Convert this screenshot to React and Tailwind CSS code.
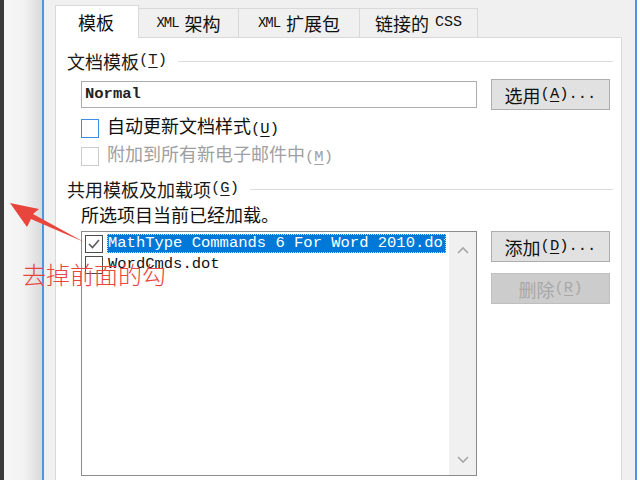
import React from 'react'

const cjk = "font-['Noto_Sans_CJK_SC',sans-serif]"
const mono = "font-['Liberation_Mono','Noto_Sans_CJK_SC',monospace]"

function Key({ k, dots }) {
  return (
    <span className={`${mono} text-[15.5px]`}>
      (<span className="underline underline-offset-[3px]">{k}</span>){dots ? '...' : ''}
    </span>
  )
}

function Group({ title, k }) {
  return (
    <div className="flex items-center h-[20px] pl-[11px] pr-[8px] text-[#1a1a1a]">
      <span className={`${cjk} text-[18px] leading-[20px]`}>{title}</span>
      <Key k={k} />
      <div className="flex-1 h-px bg-[#dcdcdc] ml-[11px]" />
    </div>
  )
}

function Button({ label, k, dots, disabled }) {
  return (
    <div
      className={
        disabled
          ? 'w-[119px] h-[31px] flex items-center justify-center bg-[#cccccc] border border-[#bfbfbf] text-[#a8a8a8]'
          : 'w-[119px] h-[31px] flex items-center justify-center bg-[#e1e1e1] border border-[#adadad] text-[#111]'
      }
    >
      <span className={`${cjk} text-[18px] leading-[20px]`}>{label}</span>
      <Key k={k} dots={dots} />
    </div>
  )
}

function Chevron({ up }) {
  return (
    <svg width="12" height="8" viewBox="0 0 12 8">
      <path
        d={up ? 'M1 7 L6 2 L11 7' : 'M1 1 L6 6 L11 1'}
        fill="none"
        stroke="#a6a6a6"
        strokeWidth="1.6"
      />
    </svg>
  )
}

function ListCheck({ checked }) {
  return (
    <div className="w-[18px] h-[18px] border border-[#4d4d4d] bg-white flex items-center justify-center shrink-0">
      {checked && (
        <svg width="14" height="14" viewBox="0 0 14 14">
          <path d="M2 7 L5.5 10.5 L12 3" fill="none" stroke="#5a5a5a" strokeWidth="1.6" />
        </svg>
      )}
    </div>
  )
}

export default function App() {
  return (
    <div className="relative w-[640px] h-[480px] overflow-hidden flex bg-[#f0f0f0]">
      <div className="w-[4px] bg-[#3a3a3a]" />
      <div className="w-[38px] bg-gradient-to-r from-[#f6f6f6] via-[#f3f3f3] to-[#dadada]" />
      <div className="w-[2px] bg-[#4f95df]" />

      {/* dialog */}
      <div className="w-[591px] flex flex-col pl-[11px] pr-[13px]">
        <div className="h-[37px] shrink-0 flex items-end">
          <div className="relative z-10 w-[84px] h-[33px] -mb-px bg-white border border-b-0 border-[#d9d9d9] flex items-center justify-center pr-[2px]">
            <span className={`${cjk} text-[18px] leading-[20px] text-[#111]`}>模板</span>
          </div>
          <div className="w-[100px] h-[29px] border-t border-r border-[#d9d9d9] flex items-center justify-center gap-[6px] text-[#111]">
            <span className={`${mono} text-[14px] tracking-[-1px]`}>XML</span>
            <span className={`${cjk} text-[18px] leading-[20px]`}>架构</span>
          </div>
          <div className="w-[121px] h-[29px] border-t border-r border-[#d9d9d9] flex items-center justify-center gap-[6px] text-[#111]">
            <span className={`${mono} text-[14px] tracking-[-1px]`}>XML</span>
            <span className={`${cjk} text-[18px] leading-[20px]`}>扩展包</span>
          </div>
          <div className="w-[118px] h-[29px] border-t border-r border-[#d9d9d9] flex items-center justify-center gap-[6px] text-[#111]">
            <span className={`${cjk} text-[18px] leading-[20px]`}>链接的</span>
            <span className={`${mono} text-[15px]`}>CSS</span>
          </div>
        </div>

        <div className="w-[567px] h-[460px] shrink-0 bg-white border border-[#d9d9d9] flex flex-col">
          <div className="mt-[13px]">
            <Group title="文档模板" k="T" />
          </div>

          <div className="mt-[8px] pl-[25px] flex items-center">
            <div className="w-[396px] h-[27px] border border-[#adadad] flex items-center pl-[3px]">
              <span className={`${mono} text-[15.5px] font-bold text-[#222]`}>Normal</span>
            </div>
            <div className="ml-[14px]">
              <Button label="选用" k="A" dots />
            </div>
          </div>

          <div className="mt-[8px] pl-[25px] h-[20px] flex items-center gap-[8px] text-[#111]">
            <div className="w-[18px] h-[19px] border-[1.5px] border-[#3a8ee6] bg-white" />
            <span>
              <span className={`${cjk} text-[18px] leading-[20px]`}>自动更新文档样式</span>
              <Key k="U" />
            </span>
          </div>

          <div className="mt-[8px] pl-[25px] h-[20px] flex items-center gap-[8px] text-[#a0a0a0]">
            <div className="w-[18px] h-[19px] border border-[#cccccc] bg-white" />
            <span>
              <span className={`${cjk} text-[18px] leading-[20px]`}>附加到所有新电子邮件中</span>
              <Key k="M" />
            </span>
          </div>

          <div className="mt-[13px]">
            <Group title="共用模板及加载项" k="G" />
          </div>

          <div className={`mt-[5px] pl-[25px] h-[20px] ${cjk} text-[18px] leading-[20px] text-[#111]`}>
            所选项目当前已经加载。
          </div>

          <div className="mt-[7px] pl-[25px] flex items-start">
            <div className="w-[396px] h-[245px] border border-[#8c8c8c] bg-white flex">
              <div className="w-[367px] flex flex-col pt-[1px]">
                <div className="h-[21px] flex items-center pl-[3px] gap-[4px]">
                  <ListCheck checked />
                  <div className="w-[339px] h-[19px] bg-[#0078d7] border border-dotted border-[#c9d9ec] overflow-hidden whitespace-nowrap flex items-center">
                    <span className={`${mono} text-[15.5px] text-white`}>MathType Commands 6 For Word 2010.dot</span>
                  </div>
                </div>
                <div className="h-[21px] flex items-center pl-[3px] gap-[5px]">
                  <ListCheck />
                  <span className={`${mono} text-[15.5px] text-[#111]`}>WordCmds.dot</span>
                </div>
              </div>
              <div className="w-[27px] bg-[#f0f0f0] flex flex-col items-center justify-between pt-[14px] pb-[11px]">
                <Chevron up />
                <Chevron />
              </div>
            </div>
            <div className="ml-[14px] flex flex-col gap-[11px]">
              <Button label="添加" k="D" dots />
              <Button label="删除" k="R" disabled />
            </div>
          </div>

          <div className={`mt-[2px] pl-[26px] ${cjk} text-[18px] leading-[20px] text-[#111]`}>
            完整路径:
          </div>
        </div>
      </div>

      <div className="w-[2px] bg-[#4f95df]" />
      <div className="w-[3px] bg-white" />

      {/* red annotation */}
      <svg className="absolute left-0 top-0" width="640" height="480">
        <polygon
          points="10,203 39,209 33,214 84,242 31,219 27,227"
          fill="#e8453c"
        />
      </svg>
      <div className={`absolute left-[22px] top-[258px] ${cjk} text-[24px] leading-[32px] font-light text-[#e8453c]`}>
        去掉前面的勾
      </div>
    </div>
  )
}
